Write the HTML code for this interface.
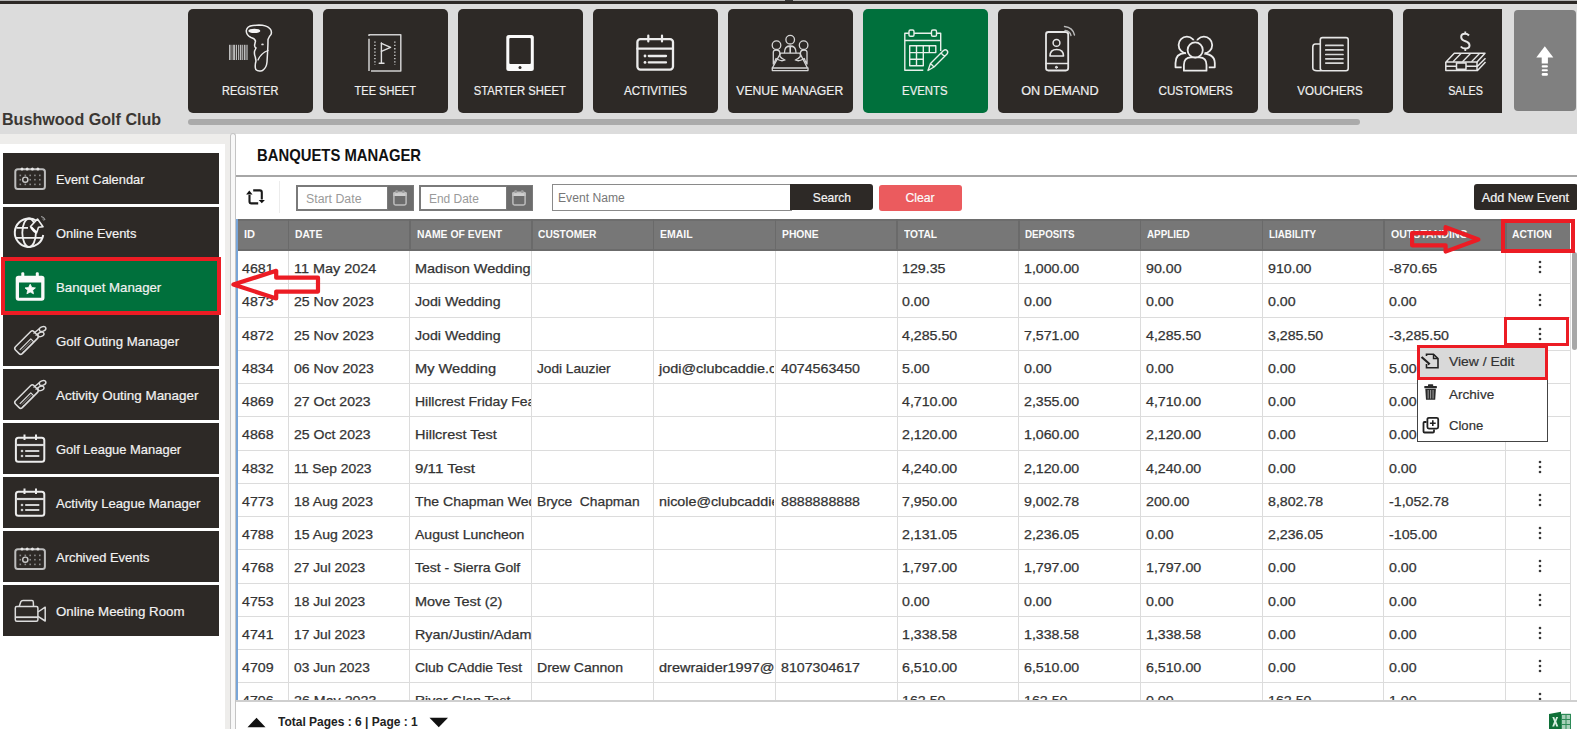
<!DOCTYPE html><html><head><meta charset="utf-8"><style>
*{margin:0;padding:0;box-sizing:border-box}
html,body{width:1577px;height:729px;overflow:hidden;background:#fff;font-family:"Liberation Sans",sans-serif;position:relative}
.a{position:absolute}
.t{position:absolute;white-space:nowrap;display:block}
.hb{position:absolute;top:9px;width:124.5px;height:103.5px;background:#2d2926;border-radius:5px}
.si{position:absolute;left:3px;width:216px;height:51px;background:#2d2926}
svg{position:absolute;overflow:visible}
</style></head><body><div class="a" style="left:0;top:0;width:1577px;height:134px;background:#dcdcdc"></div><div class="a" style="left:0;top:0;width:1577px;height:1px;background:#b4b4b4"></div><div class="a" style="left:0;top:1px;width:1577px;height:3px;background:#2d2926"></div><div class="a" style="left:784.5px;top:0;width:8px;height:1px;background:#3a3a3a"></div><span class="t" style="left:1.60px;top:111.98px;font-size:16.8px;line-height:16.8px;font-weight:bold;color:#3b3733;transform:scaleX(0.9592);transform-origin:left;">Bushwood Golf Club</span><div class="a" style="left:188px;top:0;width:1314px;height:134px;overflow:hidden"><div class="hb" style="left:0px;background:#2d2926"></div><span class="t" style="left:28.00px;top:83.76px;font-size:13.4px;line-height:13.4px;color:#f0f0f0;transform:scaleX(0.8236);transform-origin:center;-webkit-text-stroke:0.2px #f0f0f0;">REGISTER</span><div class="hb" style="left:135px;background:#2d2926"></div><span class="t" style="left:160.02px;top:83.76px;font-size:13.4px;line-height:13.4px;color:#f0f0f0;transform:scaleX(0.8245);transform-origin:center;-webkit-text-stroke:0.2px #f0f0f0;">TEE SHEET</span><div class="hb" style="left:270px;background:#2d2926"></div><span class="t" style="left:277.40px;top:83.76px;font-size:13.4px;line-height:13.4px;color:#f0f0f0;transform:scaleX(0.8402);transform-origin:center;-webkit-text-stroke:0.2px #f0f0f0;">STARTER SHEET</span><div class="hb" style="left:405px;background:#2d2926"></div><span class="t" style="left:430.77px;top:83.76px;font-size:13.4px;line-height:13.4px;color:#f0f0f0;transform:scaleX(0.8656);transform-origin:center;-webkit-text-stroke:0.2px #f0f0f0;">ACTIVITIES</span><div class="hb" style="left:540px;background:#2d2926"></div><span class="t" style="left:543.43px;top:83.76px;font-size:13.4px;line-height:13.4px;color:#f0f0f0;transform:scaleX(0.9093);transform-origin:center;-webkit-text-stroke:0.2px #f0f0f0;">VENUE MANAGER</span><div class="hb" style="left:675px;background:#00703c"></div><span class="t" style="left:710.44px;top:83.76px;font-size:13.4px;line-height:13.4px;color:#f0f0f0;transform:scaleX(0.8478);transform-origin:center;-webkit-text-stroke:0.2px #f0f0f0;">EVENTS</span><div class="hb" style="left:810px;background:#2d2926"></div><span class="t" style="left:831.30px;top:83.76px;font-size:13.4px;line-height:13.4px;color:#f0f0f0;transform:scaleX(0.9441);transform-origin:center;-webkit-text-stroke:0.2px #f0f0f0;">ON DEMAND</span><div class="hb" style="left:945px;background:#2d2926"></div><span class="t" style="left:964.56px;top:83.76px;font-size:13.4px;line-height:13.4px;color:#f0f0f0;transform:scaleX(0.8709);transform-origin:center;-webkit-text-stroke:0.2px #f0f0f0;">CUSTOMERS</span><div class="hb" style="left:1080px;background:#2d2926"></div><span class="t" style="left:1104.28px;top:83.76px;font-size:13.4px;line-height:13.4px;color:#f0f0f0;transform:scaleX(0.8624);transform-origin:center;-webkit-text-stroke:0.2px #f0f0f0;">VOUCHERS</span><div class="hb" style="left:1215px;background:#2d2926"></div><span class="t" style="left:1255.65px;top:83.76px;font-size:13.4px;line-height:13.4px;color:#f0f0f0;transform:scaleX(0.8071);transform-origin:center;-webkit-text-stroke:0.2px #f0f0f0;">SALES</span></div><div class="a" style="left:188px;top:119px;width:1172px;height:5.5px;background:#aaa;border-radius:3px"></div><div class="a" style="left:1514px;top:10px;width:62px;height:101px;background:#808080;border-radius:4px"></div><svg style="left:0;top:0" width="1577" height="134" viewBox="0 0 1577 134">
<g fill="none" stroke="#ececec" stroke-linecap="round" stroke-linejoin="round">
<!-- REGISTER: barcode + scanner -->
<g stroke="none" fill="#bdbdbd">
<rect x="229" y="44.8" width="1.6" height="15.2"/><rect x="231.6" y="44.8" width="0.8" height="15.2"/>
<rect x="233.3" y="44.8" width="1.5" height="15.2" fill="#ddd"/><rect x="235.8" y="44.8" width="1.2" height="15.2"/>
<rect x="238" y="44.8" width="0.9" height="15.2"/><rect x="239.8" y="44.8" width="1.6" height="15.2"/>
<rect x="242.2" y="44.8" width="1" height="15.2"/><rect x="244" y="44.8" width="1.5" height="15.2"/>
<rect x="246.4" y="44.8" width="1.2" height="15.2"/>
</g>
<path d="M253 25.5 Q247 26 246.3 30.5 Q246 35 251 37.5 Q255 38.5 255.5 41 L254.6 45 Q254.4 47 256 48 L254.6 51 Q254 54 255.3 57 L256 61 Q254.5 66 255.8 69.5 Q258 72 262.5 70.5 Q266.5 68 267 62 L267.7 50 Q268 44 268 39.5 Q269 36.5 271 34.5 Q272.3 31 269.8 28.5 Q266 25 259 25 Z" stroke-width="1.5"/>
<path d="M268 50.5 Q261 53 258 60" stroke-width="1.3"/>
<ellipse cx="254.3" cy="30.9" rx="6" ry="2.2" fill="#f4f4f4" stroke="none"/>
<ellipse cx="262.5" cy="44.4" rx="1.3" ry="0.9" fill="#ddd" stroke="none"/>
<!-- TEE SHEET -->
<path d="M369 36 V34.8 H400.8 V71 H371 M369 38.8 V71" stroke="#cfcfcf" stroke-width="1.5" stroke-linecap="butt"/>
<path d="M374.9 41.5 V65" stroke="#bbb" stroke-width="1.6" stroke-dasharray="1.3 2" stroke-linecap="butt"/>
<path d="M394.8 41.5 V65" stroke="#bbb" stroke-width="1.6" stroke-dasharray="1.3 2" stroke-linecap="butt"/>
<path d="M381.4 43 V63.3 M379.2 63.3 H384" stroke="#e0e0e0" stroke-width="1.4"/>
<path d="M381.4 43.3 L390.6 47.3 L381.4 51.3" stroke="#e0e0e0" stroke-width="1.4"/>
<!-- STARTER SHEET tablet -->
<rect x="506.3" y="35.1" width="27.5" height="35.9" rx="2.5" fill="#fafafa" stroke="none"/>
<rect x="509.3" y="38.1" width="21.5" height="25.8" rx="1" fill="#2d2926" stroke="none"/>
<circle cx="520" cy="67.5" r="1.5" fill="#2d2926" stroke="none"/>
<!-- ACTIVITIES -->
<rect x="637.4" y="39.1" width="35.6" height="30.5" rx="3" stroke-width="2.3"/>
<path d="M637.4 48.7 H673" stroke-width="2.2"/>
<path d="M648.3 35.5 V41.5 M662 35.5 V41.5" stroke-width="2.2"/>
<circle cx="645" cy="56" r="1.4" fill="#ececec" stroke="none"/><circle cx="645" cy="62.4" r="1.4" fill="#ececec" stroke="none"/>
<path d="M648.8 56 H666 M648.8 62.4 H666" stroke-width="2.3"/>
<!-- VENUE MANAGER -->
<g stroke="#d6d6d6" stroke-width="1.3">
<circle cx="790.2" cy="39.7" r="4.3"/><circle cx="776.5" cy="45.2" r="4.3"/><circle cx="803.6" cy="45.2" r="4.3"/>
<path d="M784.5 52.5 Q784.5 46 790.2 46 Q796 46 796 52.5"/>
<path d="M787.5 46.5 H793 M790.2 46.5 V52.5" stroke-width="1.6"/>
<path d="M780.6 53.1 H799.8 L807.5 68 H772.3 Z"/>
<path d="M772.3 68 V70.6 H808 V68"/>
<path d="M773.3 64 V52 Q773.5 50 776.5 50 Q779.5 50 779.8 52.5 L780 56.5 Q782 59 785 60 Q782 61.5 779 60 L776 58.5 Q775 62 773.3 64"/>
<path d="M807 64 V52 Q806.8 50 803.8 50 Q800.8 50 800.5 52.5 L800.3 56.5 Q798.3 59 795.3 60 Q798.3 61.5 801.3 60 L804.3 58.5 Q805.3 62 807 64"/>
</g>
<!-- EVENTS -->
<g stroke="#e8f0ea" stroke-width="1.4" stroke-linecap="butt">
<path d="M923.3 70.3 H904.8 V33.3 H940.7 V51"/>
<path d="M904.8 40.5 H940.7"/>
<rect x="909" y="30" width="5" height="6.3" rx="1.4" fill="#00703c"/><rect x="931.5" y="30" width="5" height="6.3" rx="1.4" fill="#00703c"/>
<path d="M909.7 45.8 H935.8 V52.6 H909.7 Z M909.7 52.6 V65.8 H923.3 V45.8 M916.5 45.8 V65.8 M929.3 45.8 V52.6 M909.7 59.2 H923.3"/>
<path d="M928 70.5 L930.5 63.5 L943.5 50.5 Q945.5 49 947 50.5 Q948.5 52 947 54 L934 67 Z M941 53 L945 57 M930.5 63.5 L934 67"/>
</g>
<!-- ON DEMAND -->
<g stroke="#e6e6e6" stroke-width="1.8">
<rect x="1046" y="32" width="22.2" height="38.5" rx="2.4"/>
<path d="M1046 63.5 H1068.2" stroke-width="1.5"/>
<circle cx="1056.5" cy="42.9" r="3.4" stroke-width="1.5"/>
<path d="M1050 56 Q1050 49.5 1056.7 49.5 Q1063.5 49.5 1063.5 56 Z" stroke-width="1.6"/>
<path d="M1064.5 26.5 Q1073 27.5 1074.5 35" stroke-width="1.4" stroke="#bbb"/>
<path d="M1065 30.5 Q1070 31 1071 35.5" stroke-width="1.3" stroke="#bbb"/>
</g>
<circle cx="1056.4" cy="67.3" r="1" fill="#ccc"/>
<!-- CUSTOMERS -->
<g stroke="#ececec" stroke-width="1.8">
<circle cx="1186.9" cy="45" r="8.3"/>
<circle cx="1203.9" cy="45" r="8.3"/>
<path d="M1175.5 67.3 V63 Q1175.5 53.5 1185 53 H1200 Q1214.8 53.5 1214.8 63 V67.3 Z"/>
</g>
<g fill="#2d2926" stroke="#2d2926" stroke-width="4.5">
<circle cx="1195.2" cy="49.9" r="7.6"/>
<path d="M1183.9 70.7 V65 Q1183.9 57.3 1191 57.3 H1199.5 Q1206.5 57.3 1206.5 65 V70.7 Z"/>
</g>
<g fill="#2d2926" stroke="#ececec" stroke-width="1.8">
<path d="M1183.9 70.7 V65 Q1183.9 57.3 1191 57.3 H1199.5 Q1206.5 57.3 1206.5 65 V70.7 Z"/>
<circle cx="1195.2" cy="49.9" r="7.6"/>
</g>
<!-- VOUCHERS -->
<g stroke="#e6e6e6" stroke-width="1.6">
<rect x="1320.3" y="37.6" width="27.9" height="33.2" rx="2.2"/>
<path d="M1320.3 44 H1315.5 Q1312.8 44 1312.8 47 V67.8 Q1312.8 70.8 1317 70.8 H1321"/>
<path d="M1325.8 45.4 H1343 M1325.8 49.9 H1343 M1325.8 54.5 H1343 M1325.8 58.8 H1343 M1325.8 63.1 H1343" stroke="#d8d8d8" stroke-width="1.7"/>
</g>
<!-- SALES -->
<g stroke="#e6e6e6" stroke-width="1.5" stroke-linecap="butt">
<path d="M1469 35.5 Q1467.5 33.8 1465 33.8 Q1461.2 33.8 1461.2 37 Q1461.2 40 1465.5 41.2 Q1469.5 42.5 1469.5 45.5 Q1469.5 48.5 1465.2 48.5 Q1462.3 48.5 1460.8 46.5" stroke-width="2"/>
<path d="M1465.3 31.5 V34 M1465.3 48.5 V51" stroke-width="1.8"/>
<path d="M1454.3 53.3 H1485 L1477 62 H1446 Z"/>
<path d="M1461 53.5 L1453 61.7 M1470.5 53.5 L1462.5 61.7 M1479.5 53.5 L1471.5 61.7" stroke-width="1.3"/>
<path d="M1445.8 62 V70.5 H1477.5 L1485.5 62 M1445.8 66.3 H1477.5 L1485.5 58.3 M1477 62 V70.5"/>
<rect x="1456.5" y="63" width="9.5" height="6.2" fill="#2d2926" stroke="#e6e6e6" stroke-width="1.5"/>
</g>
</g>
<!-- up arrow -->
<g fill="#fff">
<path d="M1544.8 46.3 L1553.3 57.6 H1536.3 Z"/>
<rect x="1541.7" y="57" width="6.2" height="6.5"/>
<rect x="1541.7" y="65.2" width="6.2" height="2.4" rx="1"/>
<rect x="1541.7" y="69.3" width="6.2" height="2" rx="1"/>
<rect x="1541.7" y="73" width="6.2" height="2.8" rx="1.2"/>
</g>
</svg>
<div class="a" style="left:0;top:134px;width:230px;height:595px;background:#eeedeb"></div><div class="a" style="left:0;top:144px;width:225px;height:585px;background:#fff"></div><div class="si" style="top:152.5px;background:#2d2926"></div><span class="t" style="left:56.30px;top:173.04px;font-size:13.3px;line-height:13.3px;color:#f2f2f2;transform:scaleX(0.9647);transform-origin:left;-webkit-text-stroke:0.2px #f2f2f2;">Event Calendar</span><div class="si" style="top:206.5px;background:#2d2926"></div><span class="t" style="left:56.30px;top:227.04px;font-size:13.3px;line-height:13.3px;color:#f2f2f2;transform:scaleX(0.9713);transform-origin:left;-webkit-text-stroke:0.2px #f2f2f2;">Online Events</span><div class="si" style="top:260.5px;background:#00703c"></div><span class="t" style="left:56.30px;top:281.04px;font-size:13.3px;line-height:13.3px;color:#f2f2f2;transform:scaleX(0.9959);transform-origin:left;-webkit-text-stroke:0.2px #f2f2f2;">Banquet Manager</span><div class="si" style="top:314.5px;background:#2d2926"></div><span class="t" style="left:56.30px;top:335.04px;font-size:13.3px;line-height:13.3px;color:#f2f2f2;transform:scaleX(0.9971);transform-origin:left;-webkit-text-stroke:0.2px #f2f2f2;">Golf Outing Manager</span><div class="si" style="top:368.5px;background:#2d2926"></div><span class="t" style="left:56.30px;top:389.04px;font-size:13.3px;line-height:13.3px;color:#f2f2f2;transform:scaleX(1.0090);transform-origin:left;-webkit-text-stroke:0.2px #f2f2f2;">Activity Outing Manager</span><div class="si" style="top:422.5px;background:#2d2926"></div><span class="t" style="left:56.30px;top:443.04px;font-size:13.3px;line-height:13.3px;color:#f2f2f2;transform:scaleX(0.9728);transform-origin:left;-webkit-text-stroke:0.2px #f2f2f2;">Golf League Manager</span><div class="si" style="top:476.5px;background:#2d2926"></div><span class="t" style="left:56.30px;top:497.04px;font-size:13.3px;line-height:13.3px;color:#f2f2f2;transform:scaleX(0.9872);transform-origin:left;-webkit-text-stroke:0.2px #f2f2f2;">Activity League Manager</span><div class="si" style="top:530.5px;background:#2d2926"></div><span class="t" style="left:56.30px;top:551.04px;font-size:13.3px;line-height:13.3px;color:#f2f2f2;transform:scaleX(0.9734);transform-origin:left;-webkit-text-stroke:0.2px #f2f2f2;">Archived Events</span><div class="si" style="top:584.5px;background:#2d2926"></div><span class="t" style="left:56.30px;top:605.04px;font-size:13.3px;line-height:13.3px;color:#f2f2f2;transform:scaleX(0.9997);transform-origin:left;-webkit-text-stroke:0.2px #f2f2f2;">Online Meeting Room</span><svg style="left:0;top:0" width="230" height="729" viewBox="0 0 230 729"><g transform="translate(0,0.0)"><rect x="15.3" y="169.2" width="29.6" height="19.7" rx="2.5" fill="none" stroke="#bdbdbd" stroke-width="2"/><circle cx="22" cy="169" r="1.5" fill="#e6e6e6"/><circle cx="27.2" cy="169" r="1.5" fill="#e6e6e6"/><circle cx="32.4" cy="169" r="1.5" fill="#e6e6e6"/><circle cx="37.9" cy="169" r="1.5" fill="#e6e6e6"/><rect x="19.5" y="174.6" width="1.6" height="1.6" fill="#8a8a8a"/><rect x="24.5" y="174.6" width="1.6" height="1.6" fill="#8a8a8a"/><rect x="29.4" y="174.6" width="1.6" height="1.6" fill="#8a8a8a"/><rect x="34.1" y="174.6" width="1.6" height="1.6" fill="#8a8a8a"/><rect x="39.0" y="174.6" width="1.6" height="1.6" fill="#8a8a8a"/><rect x="19.5" y="178.89999999999998" width="1.6" height="1.6" fill="#8a8a8a"/><rect x="29.4" y="178.89999999999998" width="1.6" height="1.6" fill="#8a8a8a"/><rect x="34.1" y="178.89999999999998" width="1.6" height="1.6" fill="#8a8a8a"/><rect x="39.0" y="178.89999999999998" width="1.6" height="1.6" fill="#8a8a8a"/><rect x="19.5" y="183.6" width="1.6" height="1.6" fill="#8a8a8a"/><rect x="24.5" y="183.6" width="1.6" height="1.6" fill="#8a8a8a"/><rect x="29.4" y="183.6" width="1.6" height="1.6" fill="#8a8a8a"/><rect x="34.1" y="183.6" width="1.6" height="1.6" fill="#8a8a8a"/><rect x="39.0" y="183.6" width="1.6" height="1.6" fill="#8a8a8a"/><circle cx="25.3" cy="179.7" r="2.6" fill="none" stroke="#c8c8c8" stroke-width="1.4"/></g><g fill="none" stroke="#efefef" stroke-width="2">
<path d="M36 220.5 Q33 218.5 29.1 218.4 A14.3 14.3 0 1 0 43.2 235"/>
<ellipse cx="29.1" cy="232.7" rx="6.8" ry="14.2" stroke-width="1.8"/>
<path d="M16.5 227.9 H28 M15 237.8 H43" stroke-width="1.8"/>
</g>
<path d="M30.5 226.5 L37.5 219 L43 226.8 L38.5 227.3 L36.5 233 Q33 231 31.5 228.5 Z" fill="#2d2926" stroke="#efefef" stroke-width="1.6" stroke-linejoin="round"/>
<path d="M31 227 L36.5 232.5" stroke="#fff" stroke-width="2.2"/>
<path d="M41 216.5 Q44 217 45 220" fill="none" stroke="#999" stroke-width="1.2"/>
<path d="M42.5 219 Q43.5 219.5 43.8 220.5" fill="none" stroke="#999" stroke-width="1"/><g>
<path d="M15.7 278.6 Q15.7 275.8 18.5 275.8 H41.7 Q44.5 275.8 44.5 278.6 V297.8 Q44.5 300.7 41.7 300.7 H18.5 Q15.7 300.7 15.7 297.8 Z M19 282.6 V297.7 H41.2 V282.6 Z" fill="#fafafa" fill-rule="evenodd"/>
<rect x="21.3" y="272.3" width="3" height="5" rx="1.2" fill="#fafafa"/><rect x="35.8" y="272.3" width="3" height="5" rx="1.2" fill="#fafafa"/>
<path d="M30.2 284.2 L31.8 287.5 L35.4 287.9 L32.7 290.3 L33.5 293.8 L30.2 292 L26.9 293.8 L27.7 290.3 L25 287.9 L28.6 287.5 Z" fill="#fafafa" stroke="#fafafa" stroke-width="0.8" stroke-linejoin="round"/>
</g><g transform="translate(0,0.0)" fill="none" stroke="#dcdcdc" stroke-width="1.5" stroke-linejoin="round">
<rect x="13.5" y="337.8" width="26" height="9.6" rx="2.2" transform="rotate(-45 26.5 342.6)"/>
<path d="M19.8 349.8 L30.8 338.8 L33.8 341.8 L22.8 352.8" stroke-width="1.2"/>
<path d="M22 350.5 L31.5 341 M24 351 L32.3 342.7" stroke-width="0.7" stroke="#aaa"/>
<path d="M33.5 333.5 L39.5 328.5 M35.5 335.5 L38.5 333.5" stroke-width="1.3"/>
<ellipse cx="42.6" cy="329" rx="3.4" ry="2.3" transform="rotate(-20 42.6 329)" stroke-width="1.4"/>
<ellipse cx="40.9" cy="334.4" rx="3.2" ry="2.1" transform="rotate(-20 40.9 334.4)" stroke-width="1.4"/>
</g><g transform="translate(0,54.0)" fill="none" stroke="#dcdcdc" stroke-width="1.5" stroke-linejoin="round">
<rect x="13.5" y="337.8" width="26" height="9.6" rx="2.2" transform="rotate(-45 26.5 342.6)"/>
<path d="M19.8 349.8 L30.8 338.8 L33.8 341.8 L22.8 352.8" stroke-width="1.2"/>
<path d="M22 350.5 L31.5 341 M24 351 L32.3 342.7" stroke-width="0.7" stroke="#aaa"/>
<path d="M33.5 333.5 L39.5 328.5 M35.5 335.5 L38.5 333.5" stroke-width="1.3"/>
<ellipse cx="42.6" cy="329" rx="3.4" ry="2.3" transform="rotate(-20 42.6 329)" stroke-width="1.4"/>
<ellipse cx="40.9" cy="334.4" rx="3.2" ry="2.1" transform="rotate(-20 40.9 334.4)" stroke-width="1.4"/>
</g><g transform="translate(0,0.0)" fill="none" stroke="#ececec">
<rect x="15.9" y="437.8" width="28.4" height="24" rx="2.5" stroke-width="2"/>
<path d="M15.9 445 H44.3" stroke-width="2.2" stroke="#d8d8d8"/>
<path d="M24.5 434.5 V440 M36 434.5 V440" stroke-width="2"/>
<circle cx="22" cy="451" r="1.3" fill="#ccc" stroke="none"/><circle cx="22" cy="456" r="1.3" fill="#ccc" stroke="none"/>
<path d="M25.2 451 H39.3 M25.2 456 H39.3" stroke-width="2.1" stroke="#d0d0d0"/>
</g><g transform="translate(0,54.0)" fill="none" stroke="#ececec">
<rect x="15.9" y="437.8" width="28.4" height="24" rx="2.5" stroke-width="2"/>
<path d="M15.9 445 H44.3" stroke-width="2.2" stroke="#d8d8d8"/>
<path d="M24.5 434.5 V440 M36 434.5 V440" stroke-width="2"/>
<circle cx="22" cy="451" r="1.3" fill="#ccc" stroke="none"/><circle cx="22" cy="456" r="1.3" fill="#ccc" stroke="none"/>
<path d="M25.2 451 H39.3 M25.2 456 H39.3" stroke-width="2.1" stroke="#d0d0d0"/>
</g><g transform="translate(0,380.0)"><rect x="15.3" y="169.2" width="29.6" height="19.7" rx="2.5" fill="none" stroke="#bdbdbd" stroke-width="2"/><circle cx="22" cy="169" r="1.5" fill="#e6e6e6"/><circle cx="27.2" cy="169" r="1.5" fill="#e6e6e6"/><circle cx="32.4" cy="169" r="1.5" fill="#e6e6e6"/><circle cx="37.9" cy="169" r="1.5" fill="#e6e6e6"/><rect x="19.5" y="174.6" width="1.6" height="1.6" fill="#8a8a8a"/><rect x="24.5" y="174.6" width="1.6" height="1.6" fill="#8a8a8a"/><rect x="29.4" y="174.6" width="1.6" height="1.6" fill="#8a8a8a"/><rect x="34.1" y="174.6" width="1.6" height="1.6" fill="#8a8a8a"/><rect x="39.0" y="174.6" width="1.6" height="1.6" fill="#8a8a8a"/><rect x="19.5" y="178.89999999999998" width="1.6" height="1.6" fill="#8a8a8a"/><rect x="29.4" y="178.89999999999998" width="1.6" height="1.6" fill="#8a8a8a"/><rect x="34.1" y="178.89999999999998" width="1.6" height="1.6" fill="#8a8a8a"/><rect x="39.0" y="178.89999999999998" width="1.6" height="1.6" fill="#8a8a8a"/><rect x="19.5" y="183.6" width="1.6" height="1.6" fill="#8a8a8a"/><rect x="24.5" y="183.6" width="1.6" height="1.6" fill="#8a8a8a"/><rect x="29.4" y="183.6" width="1.6" height="1.6" fill="#8a8a8a"/><rect x="34.1" y="183.6" width="1.6" height="1.6" fill="#8a8a8a"/><rect x="39.0" y="183.6" width="1.6" height="1.6" fill="#8a8a8a"/><circle cx="25.3" cy="179.7" r="2.6" fill="none" stroke="#c8c8c8" stroke-width="1.4"/></g><g fill="none" stroke="#dcdcdc" stroke-width="1.5" stroke-linejoin="round">
<rect x="15.3" y="606.5" width="22.6" height="14.8" rx="1.5"/>
<path d="M15.3 617.2 H37.9" stroke-width="1.8"/>
<path d="M19.3 606.3 L20.8 601.8 Q21.3 600.5 23 600.5 H32 Q33.2 600.5 33.3 602 L33.5 606.3"/>
<path d="M38 612 L45.2 607.2 V621 L38 616.3"/>
</g></svg><div class="a" style="left:230px;top:133px;width:6px;height:596px;border:1px solid #c4c4c4;border-bottom:none;border-radius:3px 3px 0 0;background:#f8f8f8"></div><span class="t" style="left:257.40px;top:147.00px;font-size:16.3px;line-height:16.3px;font-weight:bold;color:#111;transform:scaleX(0.9115);transform-origin:left;">BANQUETS MANAGER</span><div class="a" style="left:236px;top:175px;width:1341px;height:2px;background:#a6a6a6"></div><svg style="left:240px;top:182px" width="30" height="30" viewBox="0 0 30 30">
<path d="M9.5 13 V19.5 Q9.5 21.4 11.5 21.4 H18.2" fill="none" stroke="#1a1a1a" stroke-width="2.1"/>
<path d="M13.2 8.4 H19.8 Q21.8 8.4 21.8 10.4 V17.5" fill="none" stroke="#1a1a1a" stroke-width="2.1"/>
<path d="M9.3 8.6 L12.5 12.4 L6.1 12.4 Z" fill="#111"/>
<path d="M21.8 21.2 L24.9 18 L18.7 18 Z" fill="#111"/>
</svg><div class="a" style="left:278.5px;top:181px;width:1.5px;height:32px;background:#ececec"></div><div class="a" style="left:296px;top:184.5px;width:118px;height:26px;border:2px solid #7a7a7a;background:#fff"></div><div class="a" style="left:386.5px;top:184.5px;width:27.5px;height:26px;background:#6d6d6d;border:1.5px solid #7a7a7a"></div><span class="t" style="left:306.20px;top:193.04px;font-size:12px;line-height:12px;color:#9a9a9a;transform:scaleX(1.0270);transform-origin:left;">Start Date</span><svg style="left:392px;top:189px" width="16" height="17" viewBox="0 0 16 17">
<path d="M1.2 4.5 Q1.2 2.8 3 2.8 H13 Q14.8 2.8 14.8 4.5 V7 H1.2 Z" fill="#cfcfcf"/>
<rect x="1.9" y="3.4" width="12.2" height="12.5" rx="1.6" fill="none" stroke="#bdbdbd" stroke-width="1.5"/>
<rect x="3.4" y="1" width="2.6" height="3" rx="1.2" fill="#9a9a9a"/><rect x="10" y="1" width="2.6" height="3" rx="1.2" fill="#9a9a9a"/>
</svg><div class="a" style="left:419px;top:184.5px;width:114px;height:26px;border:2px solid #7a7a7a;background:#fff"></div><div class="a" style="left:505.5px;top:184.5px;width:27.5px;height:26px;background:#6d6d6d;border:1.5px solid #7a7a7a"></div><span class="t" style="left:429.20px;top:193.04px;font-size:12px;line-height:12px;color:#9a9a9a;transform:scaleX(0.9959);transform-origin:left;">End Date</span><svg style="left:511px;top:189px" width="16" height="17" viewBox="0 0 16 17">
<path d="M1.2 4.5 Q1.2 2.8 3 2.8 H13 Q14.8 2.8 14.8 4.5 V7 H1.2 Z" fill="#cfcfcf"/>
<rect x="1.9" y="3.4" width="12.2" height="12.5" rx="1.6" fill="none" stroke="#bdbdbd" stroke-width="1.5"/>
<rect x="3.4" y="1" width="2.6" height="3" rx="1.2" fill="#9a9a9a"/><rect x="10" y="1" width="2.6" height="3" rx="1.2" fill="#9a9a9a"/>
</svg><div class="a" style="left:551.5px;top:184px;width:240px;height:26.5px;border:1.5px solid #8a8a8a;background:#fff"></div><span class="t" style="left:557.50px;top:192.34px;font-size:12px;line-height:12px;color:#777;transform:scaleX(1.0112);transform-origin:left;">Event Name</span><div class="a" style="left:790.3px;top:184.3px;width:83px;height:26.2px;background:#2d2926;border-radius:0 3px 3px 0"></div><span class="t" style="left:811.54px;top:191.83px;font-size:12.6px;line-height:12.6px;color:#f4f4f4;transform:scaleX(0.9584);transform-origin:center;-webkit-text-stroke:0.2px #f4f4f4;">Search</span><div class="a" style="left:879px;top:184.6px;width:83px;height:26px;background:#eb5b5e;border-radius:3px"></div><span class="t" style="left:905.44px;top:191.83px;font-size:12.6px;line-height:12.6px;color:#fff;transform:scaleX(0.9713);transform-origin:center;-webkit-text-stroke:0.2px #f4f4f4;">Clear</span><div class="a" style="left:1473.5px;top:184.2px;width:104px;height:26px;background:#2d2926;border-radius:3px"></div><span class="t" style="left:1482.08px;top:191.83px;font-size:12.6px;line-height:12.6px;color:#f4f4f4;transform:scaleX(1.0056);transform-origin:center;-webkit-text-stroke:0.2px #f4f4f4;">Add New Event</span><div class="a" style="left:237px;top:219px;width:1333px;height:32px;background:#777"></div><div class="a" style="left:237px;top:249px;width:1333px;height:2px;background:#6b6b6b"></div><div class="a" style="left:237px;top:219px;width:1333px;height:2px;background:#6d6d6d"></div><span class="t" style="left:243.50px;top:229.42px;font-size:11.2px;line-height:11.2px;font-weight:bold;color:#fafafa;transform:scaleX(0.9851);transform-origin:left;">ID</span><span class="t" style="left:295.10px;top:229.42px;font-size:11.2px;line-height:11.2px;font-weight:bold;color:#fafafa;transform:scaleX(0.9203);transform-origin:left;">DATE</span><div class="a" style="left:287.85px;top:219px;width:1.5px;height:32px;background:#6a6a6a"></div><span class="t" style="left:416.50px;top:229.42px;font-size:11.2px;line-height:11.2px;font-weight:bold;color:#fafafa;transform:scaleX(0.9262);transform-origin:left;">NAME OF EVENT</span><div class="a" style="left:409.25px;top:219px;width:1.5px;height:32px;background:#6a6a6a"></div><span class="t" style="left:538.25px;top:229.42px;font-size:11.2px;line-height:11.2px;font-weight:bold;color:#fafafa;transform:scaleX(0.9147);transform-origin:left;">CUSTOMER</span><div class="a" style="left:531.0px;top:219px;width:1.5px;height:32px;background:#6a6a6a"></div><span class="t" style="left:660.00px;top:229.42px;font-size:11.2px;line-height:11.2px;font-weight:bold;color:#fafafa;transform:scaleX(0.9383);transform-origin:left;">EMAIL</span><div class="a" style="left:652.75px;top:219px;width:1.5px;height:32px;background:#6a6a6a"></div><span class="t" style="left:781.75px;top:229.42px;font-size:11.2px;line-height:11.2px;font-weight:bold;color:#fafafa;transform:scaleX(0.9221);transform-origin:left;">PHONE</span><div class="a" style="left:774.5px;top:219px;width:1.5px;height:32px;background:#6a6a6a"></div><span class="t" style="left:903.50px;top:229.42px;font-size:11.2px;line-height:11.2px;font-weight:bold;color:#fafafa;transform:scaleX(0.9134);transform-origin:left;">TOTAL</span><div class="a" style="left:896.25px;top:219px;width:1.5px;height:32px;background:#6a6a6a"></div><span class="t" style="left:1025.25px;top:229.42px;font-size:11.2px;line-height:11.2px;font-weight:bold;color:#fafafa;transform:scaleX(0.8761);transform-origin:left;">DEPOSITS</span><div class="a" style="left:1018.0px;top:219px;width:1.5px;height:32px;background:#6a6a6a"></div><span class="t" style="left:1147.00px;top:229.42px;font-size:11.2px;line-height:11.2px;font-weight:bold;color:#fafafa;transform:scaleX(0.8813);transform-origin:left;">APPLIED</span><div class="a" style="left:1139.75px;top:219px;width:1.5px;height:32px;background:#6a6a6a"></div><span class="t" style="left:1268.75px;top:229.42px;font-size:11.2px;line-height:11.2px;font-weight:bold;color:#fafafa;transform:scaleX(0.8802);transform-origin:left;">LIABILITY</span><div class="a" style="left:1261.5px;top:219px;width:1.5px;height:32px;background:#6a6a6a"></div><span class="t" style="left:1390.50px;top:229.42px;font-size:11.2px;line-height:11.2px;font-weight:bold;color:#fafafa;transform:scaleX(0.9456);transform-origin:left;">OUTSTANDING</span><div class="a" style="left:1383.25px;top:219px;width:1.5px;height:32px;background:#6a6a6a"></div><span class="t" style="left:1512.25px;top:229.42px;font-size:11.2px;line-height:11.2px;font-weight:bold;color:#fafafa;transform:scaleX(0.9260);transform-origin:left;">ACTION</span><div class="a" style="left:1505.0px;top:219px;width:1.5px;height:32px;background:#6a6a6a"></div><div class="a" style="left:237px;top:251px;width:1335px;height:450px;overflow:hidden"><div class="a" style="left:0;top:32px;width:1333px;height:1px;background:#dcdcdc"></div><div class="a" style="left:0px;top:0.00px;width:50.60000000000002px;height:33px;overflow:hidden"><span class="t" style="left:5.30px;top:11.03px;font-size:13.2px;line-height:13.2px;color:#333;transform:scaleX(1.0773);transform-origin:left;-webkit-text-stroke:0.25px #333;">4681</span></div><div class="a" style="left:51.60000000000002px;top:0.00px;width:120.39999999999998px;height:33px;overflow:hidden"><span class="t" style="left:5.30px;top:11.03px;font-size:13.2px;line-height:13.2px;color:#333;transform:scaleX(1.0935);transform-origin:left;-webkit-text-stroke:0.25px #333;">11 May 2024</span></div><div class="a" style="left:173px;top:0.00px;width:120.75px;height:33px;overflow:hidden"><span class="t" style="left:5.30px;top:11.03px;font-size:13.2px;line-height:13.2px;color:#333;transform:scaleX(1.0983);transform-origin:left;-webkit-text-stroke:0.25px #333;">Madison Wedding</span></div><div class="a" style="left:660px;top:0.00px;width:120.75px;height:33px;overflow:hidden"><span class="t" style="left:5.30px;top:11.03px;font-size:13.2px;line-height:13.2px;color:#333;transform:scaleX(1.0768);transform-origin:left;-webkit-text-stroke:0.25px #333;">129.35</span></div><div class="a" style="left:781.75px;top:0.00px;width:120.75px;height:33px;overflow:hidden"><span class="t" style="left:5.30px;top:11.03px;font-size:13.2px;line-height:13.2px;color:#333;transform:scaleX(1.0760);transform-origin:left;-webkit-text-stroke:0.25px #333;">1,000.00</span></div><div class="a" style="left:903.5px;top:0.00px;width:120.75px;height:33px;overflow:hidden"><span class="t" style="left:5.30px;top:11.03px;font-size:13.2px;line-height:13.2px;color:#333;transform:scaleX(1.0767);transform-origin:left;-webkit-text-stroke:0.25px #333;">90.00</span></div><div class="a" style="left:1025.25px;top:0.00px;width:120.75px;height:33px;overflow:hidden"><span class="t" style="left:5.30px;top:11.03px;font-size:13.2px;line-height:13.2px;color:#333;transform:scaleX(1.0768);transform-origin:left;-webkit-text-stroke:0.25px #333;">910.00</span></div><div class="a" style="left:1147px;top:0.00px;width:120.75px;height:33px;overflow:hidden"><span class="t" style="left:5.30px;top:11.03px;font-size:13.2px;line-height:13.2px;color:#333;transform:scaleX(1.0777);transform-origin:left;-webkit-text-stroke:0.25px #333;">-870.65</span></div><svg style="left:1301px;top:9.00px" width="4" height="14"><circle cx="2" cy="2" r="1.3" fill="#3a3a3a"/><circle cx="2" cy="7" r="1.3" fill="#3a3a3a"/><circle cx="2" cy="12" r="1.3" fill="#3a3a3a"/></svg><div class="a" style="left:0;top:66px;width:1333px;height:1px;background:#dcdcdc"></div><div class="a" style="left:0px;top:33.25px;width:50.60000000000002px;height:33px;overflow:hidden"><span class="t" style="left:5.30px;top:11.03px;font-size:13.2px;line-height:13.2px;color:#333;transform:scaleX(1.0773);transform-origin:left;-webkit-text-stroke:0.25px #333;">4873</span></div><div class="a" style="left:51.60000000000002px;top:33.25px;width:120.39999999999998px;height:33px;overflow:hidden"><span class="t" style="left:5.30px;top:11.03px;font-size:13.2px;line-height:13.2px;color:#333;transform:scaleX(1.0668);transform-origin:left;-webkit-text-stroke:0.25px #333;">25 Nov 2023</span></div><div class="a" style="left:173px;top:33.25px;width:120.75px;height:33px;overflow:hidden"><span class="t" style="left:5.30px;top:11.03px;font-size:13.2px;line-height:13.2px;color:#333;transform:scaleX(1.0742);transform-origin:left;-webkit-text-stroke:0.25px #333;">Jodi Wedding</span></div><div class="a" style="left:660px;top:33.25px;width:120.75px;height:33px;overflow:hidden"><span class="t" style="left:5.30px;top:11.03px;font-size:13.2px;line-height:13.2px;color:#333;transform:scaleX(1.0766);transform-origin:left;-webkit-text-stroke:0.25px #333;">0.00</span></div><div class="a" style="left:781.75px;top:33.25px;width:120.75px;height:33px;overflow:hidden"><span class="t" style="left:5.30px;top:11.03px;font-size:13.2px;line-height:13.2px;color:#333;transform:scaleX(1.0766);transform-origin:left;-webkit-text-stroke:0.25px #333;">0.00</span></div><div class="a" style="left:903.5px;top:33.25px;width:120.75px;height:33px;overflow:hidden"><span class="t" style="left:5.30px;top:11.03px;font-size:13.2px;line-height:13.2px;color:#333;transform:scaleX(1.0766);transform-origin:left;-webkit-text-stroke:0.25px #333;">0.00</span></div><div class="a" style="left:1025.25px;top:33.25px;width:120.75px;height:33px;overflow:hidden"><span class="t" style="left:5.30px;top:11.03px;font-size:13.2px;line-height:13.2px;color:#333;transform:scaleX(1.0766);transform-origin:left;-webkit-text-stroke:0.25px #333;">0.00</span></div><div class="a" style="left:1147px;top:33.25px;width:120.75px;height:33px;overflow:hidden"><span class="t" style="left:5.30px;top:11.03px;font-size:13.2px;line-height:13.2px;color:#333;transform:scaleX(1.0766);transform-origin:left;-webkit-text-stroke:0.25px #333;">0.00</span></div><svg style="left:1301px;top:42.25px" width="4" height="14"><circle cx="2" cy="2" r="1.3" fill="#3a3a3a"/><circle cx="2" cy="7" r="1.3" fill="#3a3a3a"/><circle cx="2" cy="12" r="1.3" fill="#3a3a3a"/></svg><div class="a" style="left:0;top:99px;width:1333px;height:1px;background:#dcdcdc"></div><div class="a" style="left:0px;top:66.50px;width:50.60000000000002px;height:33px;overflow:hidden"><span class="t" style="left:5.30px;top:11.03px;font-size:13.2px;line-height:13.2px;color:#333;transform:scaleX(1.0773);transform-origin:left;-webkit-text-stroke:0.25px #333;">4872</span></div><div class="a" style="left:51.60000000000002px;top:66.50px;width:120.39999999999998px;height:33px;overflow:hidden"><span class="t" style="left:5.30px;top:11.03px;font-size:13.2px;line-height:13.2px;color:#333;transform:scaleX(1.0668);transform-origin:left;-webkit-text-stroke:0.25px #333;">25 Nov 2023</span></div><div class="a" style="left:173px;top:66.50px;width:120.75px;height:33px;overflow:hidden"><span class="t" style="left:5.30px;top:11.03px;font-size:13.2px;line-height:13.2px;color:#333;transform:scaleX(1.0742);transform-origin:left;-webkit-text-stroke:0.25px #333;">Jodi Wedding</span></div><div class="a" style="left:660px;top:66.50px;width:120.75px;height:33px;overflow:hidden"><span class="t" style="left:5.30px;top:11.03px;font-size:13.2px;line-height:13.2px;color:#333;transform:scaleX(1.0760);transform-origin:left;-webkit-text-stroke:0.25px #333;">4,285.50</span></div><div class="a" style="left:781.75px;top:66.50px;width:120.75px;height:33px;overflow:hidden"><span class="t" style="left:5.30px;top:11.03px;font-size:13.2px;line-height:13.2px;color:#333;transform:scaleX(1.0760);transform-origin:left;-webkit-text-stroke:0.25px #333;">7,571.00</span></div><div class="a" style="left:903.5px;top:66.50px;width:120.75px;height:33px;overflow:hidden"><span class="t" style="left:5.30px;top:11.03px;font-size:13.2px;line-height:13.2px;color:#333;transform:scaleX(1.0760);transform-origin:left;-webkit-text-stroke:0.25px #333;">4,285.50</span></div><div class="a" style="left:1025.25px;top:66.50px;width:120.75px;height:33px;overflow:hidden"><span class="t" style="left:5.30px;top:11.03px;font-size:13.2px;line-height:13.2px;color:#333;transform:scaleX(1.0760);transform-origin:left;-webkit-text-stroke:0.25px #333;">3,285.50</span></div><div class="a" style="left:1147px;top:66.50px;width:120.75px;height:33px;overflow:hidden"><span class="t" style="left:5.30px;top:11.03px;font-size:13.2px;line-height:13.2px;color:#333;transform:scaleX(1.0767);transform-origin:left;-webkit-text-stroke:0.25px #333;">-3,285.50</span></div><svg style="left:1301px;top:75.50px" width="4" height="14"><circle cx="2" cy="2" r="1.3" fill="#3a3a3a"/><circle cx="2" cy="7" r="1.3" fill="#3a3a3a"/><circle cx="2" cy="12" r="1.3" fill="#3a3a3a"/></svg><div class="a" style="left:0;top:132px;width:1333px;height:1px;background:#dcdcdc"></div><div class="a" style="left:0px;top:99.75px;width:50.60000000000002px;height:33px;overflow:hidden"><span class="t" style="left:5.30px;top:11.03px;font-size:13.2px;line-height:13.2px;color:#333;transform:scaleX(1.0773);transform-origin:left;-webkit-text-stroke:0.25px #333;">4834</span></div><div class="a" style="left:51.60000000000002px;top:99.75px;width:120.39999999999998px;height:33px;overflow:hidden"><span class="t" style="left:5.30px;top:11.03px;font-size:13.2px;line-height:13.2px;color:#333;transform:scaleX(1.0668);transform-origin:left;-webkit-text-stroke:0.25px #333;">06 Nov 2023</span></div><div class="a" style="left:173px;top:99.75px;width:120.75px;height:33px;overflow:hidden"><span class="t" style="left:5.30px;top:11.03px;font-size:13.2px;line-height:13.2px;color:#333;transform:scaleX(1.1089);transform-origin:left;-webkit-text-stroke:0.25px #333;">My Wedding</span></div><div class="a" style="left:294.75px;top:99.75px;width:120.75px;height:33px;overflow:hidden"><span class="t" style="left:5.30px;top:11.03px;font-size:13.2px;line-height:13.2px;color:#333;transform:scaleX(1.0351);transform-origin:left;-webkit-text-stroke:0.25px #333;">Jodi Lauzier</span></div><div class="a" style="left:416.5px;top:99.75px;width:120.75px;height:33px;overflow:hidden"><span class="t" style="left:5.30px;top:11.03px;font-size:13.2px;line-height:13.2px;color:#333;transform:scaleX(1.0929);transform-origin:left;-webkit-text-stroke:0.25px #333;">jodi@clubcaddie.com</span></div><div class="a" style="left:538.25px;top:99.75px;width:120.75px;height:33px;overflow:hidden"><span class="t" style="left:5.30px;top:11.03px;font-size:13.2px;line-height:13.2px;color:#333;transform:scaleX(1.0773);transform-origin:left;-webkit-text-stroke:0.25px #333;">4074563450</span></div><div class="a" style="left:660px;top:99.75px;width:120.75px;height:33px;overflow:hidden"><span class="t" style="left:5.30px;top:11.03px;font-size:13.2px;line-height:13.2px;color:#333;transform:scaleX(1.0766);transform-origin:left;-webkit-text-stroke:0.25px #333;">5.00</span></div><div class="a" style="left:781.75px;top:99.75px;width:120.75px;height:33px;overflow:hidden"><span class="t" style="left:5.30px;top:11.03px;font-size:13.2px;line-height:13.2px;color:#333;transform:scaleX(1.0766);transform-origin:left;-webkit-text-stroke:0.25px #333;">0.00</span></div><div class="a" style="left:903.5px;top:99.75px;width:120.75px;height:33px;overflow:hidden"><span class="t" style="left:5.30px;top:11.03px;font-size:13.2px;line-height:13.2px;color:#333;transform:scaleX(1.0766);transform-origin:left;-webkit-text-stroke:0.25px #333;">0.00</span></div><div class="a" style="left:1025.25px;top:99.75px;width:120.75px;height:33px;overflow:hidden"><span class="t" style="left:5.30px;top:11.03px;font-size:13.2px;line-height:13.2px;color:#333;transform:scaleX(1.0766);transform-origin:left;-webkit-text-stroke:0.25px #333;">0.00</span></div><div class="a" style="left:1147px;top:99.75px;width:120.75px;height:33px;overflow:hidden"><span class="t" style="left:5.30px;top:11.03px;font-size:13.2px;line-height:13.2px;color:#333;transform:scaleX(1.0766);transform-origin:left;-webkit-text-stroke:0.25px #333;">5.00</span></div><svg style="left:1301px;top:108.75px" width="4" height="14"><circle cx="2" cy="2" r="1.3" fill="#3a3a3a"/><circle cx="2" cy="7" r="1.3" fill="#3a3a3a"/><circle cx="2" cy="12" r="1.3" fill="#3a3a3a"/></svg><div class="a" style="left:0;top:165px;width:1333px;height:1px;background:#dcdcdc"></div><div class="a" style="left:0px;top:133.00px;width:50.60000000000002px;height:33px;overflow:hidden"><span class="t" style="left:5.30px;top:11.03px;font-size:13.2px;line-height:13.2px;color:#333;transform:scaleX(1.0773);transform-origin:left;-webkit-text-stroke:0.25px #333;">4869</span></div><div class="a" style="left:51.60000000000002px;top:133.00px;width:120.39999999999998px;height:33px;overflow:hidden"><span class="t" style="left:5.30px;top:11.03px;font-size:13.2px;line-height:13.2px;color:#333;transform:scaleX(1.0659);transform-origin:left;-webkit-text-stroke:0.25px #333;">27 Oct 2023</span></div><div class="a" style="left:173px;top:133.00px;width:120.75px;height:33px;overflow:hidden"><span class="t" style="left:5.30px;top:11.03px;font-size:13.2px;line-height:13.2px;color:#333;transform:scaleX(1.0594);transform-origin:left;-webkit-text-stroke:0.25px #333;">Hillcrest Friday Feast</span></div><div class="a" style="left:660px;top:133.00px;width:120.75px;height:33px;overflow:hidden"><span class="t" style="left:5.30px;top:11.03px;font-size:13.2px;line-height:13.2px;color:#333;transform:scaleX(1.0760);transform-origin:left;-webkit-text-stroke:0.25px #333;">4,710.00</span></div><div class="a" style="left:781.75px;top:133.00px;width:120.75px;height:33px;overflow:hidden"><span class="t" style="left:5.30px;top:11.03px;font-size:13.2px;line-height:13.2px;color:#333;transform:scaleX(1.0760);transform-origin:left;-webkit-text-stroke:0.25px #333;">2,355.00</span></div><div class="a" style="left:903.5px;top:133.00px;width:120.75px;height:33px;overflow:hidden"><span class="t" style="left:5.30px;top:11.03px;font-size:13.2px;line-height:13.2px;color:#333;transform:scaleX(1.0760);transform-origin:left;-webkit-text-stroke:0.25px #333;">4,710.00</span></div><div class="a" style="left:1025.25px;top:133.00px;width:120.75px;height:33px;overflow:hidden"><span class="t" style="left:5.30px;top:11.03px;font-size:13.2px;line-height:13.2px;color:#333;transform:scaleX(1.0766);transform-origin:left;-webkit-text-stroke:0.25px #333;">0.00</span></div><div class="a" style="left:1147px;top:133.00px;width:120.75px;height:33px;overflow:hidden"><span class="t" style="left:5.30px;top:11.03px;font-size:13.2px;line-height:13.2px;color:#333;transform:scaleX(1.0766);transform-origin:left;-webkit-text-stroke:0.25px #333;">0.00</span></div><svg style="left:1301px;top:142.00px" width="4" height="14"><circle cx="2" cy="2" r="1.3" fill="#3a3a3a"/><circle cx="2" cy="7" r="1.3" fill="#3a3a3a"/><circle cx="2" cy="12" r="1.3" fill="#3a3a3a"/></svg><div class="a" style="left:0;top:199px;width:1333px;height:1px;background:#dcdcdc"></div><div class="a" style="left:0px;top:166.25px;width:50.60000000000002px;height:33px;overflow:hidden"><span class="t" style="left:5.30px;top:11.03px;font-size:13.2px;line-height:13.2px;color:#333;transform:scaleX(1.0773);transform-origin:left;-webkit-text-stroke:0.25px #333;">4868</span></div><div class="a" style="left:51.60000000000002px;top:166.25px;width:120.39999999999998px;height:33px;overflow:hidden"><span class="t" style="left:5.30px;top:11.03px;font-size:13.2px;line-height:13.2px;color:#333;transform:scaleX(1.0659);transform-origin:left;-webkit-text-stroke:0.25px #333;">25 Oct 2023</span></div><div class="a" style="left:173px;top:166.25px;width:120.75px;height:33px;overflow:hidden"><span class="t" style="left:5.30px;top:11.03px;font-size:13.2px;line-height:13.2px;color:#333;transform:scaleX(1.0974);transform-origin:left;-webkit-text-stroke:0.25px #333;">Hillcrest Test</span></div><div class="a" style="left:660px;top:166.25px;width:120.75px;height:33px;overflow:hidden"><span class="t" style="left:5.30px;top:11.03px;font-size:13.2px;line-height:13.2px;color:#333;transform:scaleX(1.0760);transform-origin:left;-webkit-text-stroke:0.25px #333;">2,120.00</span></div><div class="a" style="left:781.75px;top:166.25px;width:120.75px;height:33px;overflow:hidden"><span class="t" style="left:5.30px;top:11.03px;font-size:13.2px;line-height:13.2px;color:#333;transform:scaleX(1.0760);transform-origin:left;-webkit-text-stroke:0.25px #333;">1,060.00</span></div><div class="a" style="left:903.5px;top:166.25px;width:120.75px;height:33px;overflow:hidden"><span class="t" style="left:5.30px;top:11.03px;font-size:13.2px;line-height:13.2px;color:#333;transform:scaleX(1.0760);transform-origin:left;-webkit-text-stroke:0.25px #333;">2,120.00</span></div><div class="a" style="left:1025.25px;top:166.25px;width:120.75px;height:33px;overflow:hidden"><span class="t" style="left:5.30px;top:11.03px;font-size:13.2px;line-height:13.2px;color:#333;transform:scaleX(1.0766);transform-origin:left;-webkit-text-stroke:0.25px #333;">0.00</span></div><div class="a" style="left:1147px;top:166.25px;width:120.75px;height:33px;overflow:hidden"><span class="t" style="left:5.30px;top:11.03px;font-size:13.2px;line-height:13.2px;color:#333;transform:scaleX(1.0766);transform-origin:left;-webkit-text-stroke:0.25px #333;">0.00</span></div><svg style="left:1301px;top:175.25px" width="4" height="14"><circle cx="2" cy="2" r="1.3" fill="#3a3a3a"/><circle cx="2" cy="7" r="1.3" fill="#3a3a3a"/><circle cx="2" cy="12" r="1.3" fill="#3a3a3a"/></svg><div class="a" style="left:0;top:232px;width:1333px;height:1px;background:#dcdcdc"></div><div class="a" style="left:0px;top:199.50px;width:50.60000000000002px;height:33px;overflow:hidden"><span class="t" style="left:5.30px;top:11.03px;font-size:13.2px;line-height:13.2px;color:#333;transform:scaleX(1.0773);transform-origin:left;-webkit-text-stroke:0.25px #333;">4832</span></div><div class="a" style="left:51.60000000000002px;top:199.50px;width:120.39999999999998px;height:33px;overflow:hidden"><span class="t" style="left:5.30px;top:11.03px;font-size:13.2px;line-height:13.2px;color:#333;transform:scaleX(1.0505);transform-origin:left;-webkit-text-stroke:0.25px #333;">11 Sep 2023</span></div><div class="a" style="left:173px;top:199.50px;width:120.75px;height:33px;overflow:hidden"><span class="t" style="left:5.30px;top:11.03px;font-size:13.2px;line-height:13.2px;color:#333;transform:scaleX(1.1455);transform-origin:left;-webkit-text-stroke:0.25px #333;">9/11 Test</span></div><div class="a" style="left:660px;top:199.50px;width:120.75px;height:33px;overflow:hidden"><span class="t" style="left:5.30px;top:11.03px;font-size:13.2px;line-height:13.2px;color:#333;transform:scaleX(1.0760);transform-origin:left;-webkit-text-stroke:0.25px #333;">4,240.00</span></div><div class="a" style="left:781.75px;top:199.50px;width:120.75px;height:33px;overflow:hidden"><span class="t" style="left:5.30px;top:11.03px;font-size:13.2px;line-height:13.2px;color:#333;transform:scaleX(1.0760);transform-origin:left;-webkit-text-stroke:0.25px #333;">2,120.00</span></div><div class="a" style="left:903.5px;top:199.50px;width:120.75px;height:33px;overflow:hidden"><span class="t" style="left:5.30px;top:11.03px;font-size:13.2px;line-height:13.2px;color:#333;transform:scaleX(1.0760);transform-origin:left;-webkit-text-stroke:0.25px #333;">4,240.00</span></div><div class="a" style="left:1025.25px;top:199.50px;width:120.75px;height:33px;overflow:hidden"><span class="t" style="left:5.30px;top:11.03px;font-size:13.2px;line-height:13.2px;color:#333;transform:scaleX(1.0766);transform-origin:left;-webkit-text-stroke:0.25px #333;">0.00</span></div><div class="a" style="left:1147px;top:199.50px;width:120.75px;height:33px;overflow:hidden"><span class="t" style="left:5.30px;top:11.03px;font-size:13.2px;line-height:13.2px;color:#333;transform:scaleX(1.0766);transform-origin:left;-webkit-text-stroke:0.25px #333;">0.00</span></div><svg style="left:1301px;top:208.50px" width="4" height="14"><circle cx="2" cy="2" r="1.3" fill="#3a3a3a"/><circle cx="2" cy="7" r="1.3" fill="#3a3a3a"/><circle cx="2" cy="12" r="1.3" fill="#3a3a3a"/></svg><div class="a" style="left:0;top:265px;width:1333px;height:1px;background:#dcdcdc"></div><div class="a" style="left:0px;top:232.75px;width:50.60000000000002px;height:33px;overflow:hidden"><span class="t" style="left:5.30px;top:11.03px;font-size:13.2px;line-height:13.2px;color:#333;transform:scaleX(1.0773);transform-origin:left;-webkit-text-stroke:0.25px #333;">4773</span></div><div class="a" style="left:51.60000000000002px;top:232.75px;width:120.39999999999998px;height:33px;overflow:hidden"><span class="t" style="left:5.30px;top:11.03px;font-size:13.2px;line-height:13.2px;color:#333;transform:scaleX(1.0665);transform-origin:left;-webkit-text-stroke:0.25px #333;">18 Aug 2023</span></div><div class="a" style="left:173px;top:232.75px;width:120.75px;height:33px;overflow:hidden"><span class="t" style="left:5.30px;top:11.03px;font-size:13.2px;line-height:13.2px;color:#333;transform:scaleX(1.0638);transform-origin:left;-webkit-text-stroke:0.25px #333;">The Chapman Wedding</span></div><div class="a" style="left:294.75px;top:232.75px;width:120.75px;height:33px;overflow:hidden"><span class="t" style="left:5.30px;top:11.03px;font-size:13.2px;line-height:13.2px;color:#333;transform:scaleX(1.0447);transform-origin:left;-webkit-text-stroke:0.25px #333;">Bryce&nbsp; Chapman</span></div><div class="a" style="left:416.5px;top:232.75px;width:120.75px;height:33px;overflow:hidden"><span class="t" style="left:5.30px;top:11.03px;font-size:13.2px;line-height:13.2px;color:#333;transform:scaleX(1.0857);transform-origin:left;-webkit-text-stroke:0.25px #333;">nicole@clubcaddie.com</span></div><div class="a" style="left:538.25px;top:232.75px;width:120.75px;height:33px;overflow:hidden"><span class="t" style="left:5.30px;top:11.03px;font-size:13.2px;line-height:13.2px;color:#333;transform:scaleX(1.0773);transform-origin:left;-webkit-text-stroke:0.25px #333;">8888888888</span></div><div class="a" style="left:660px;top:232.75px;width:120.75px;height:33px;overflow:hidden"><span class="t" style="left:5.30px;top:11.03px;font-size:13.2px;line-height:13.2px;color:#333;transform:scaleX(1.0760);transform-origin:left;-webkit-text-stroke:0.25px #333;">7,950.00</span></div><div class="a" style="left:781.75px;top:232.75px;width:120.75px;height:33px;overflow:hidden"><span class="t" style="left:5.30px;top:11.03px;font-size:13.2px;line-height:13.2px;color:#333;transform:scaleX(1.0760);transform-origin:left;-webkit-text-stroke:0.25px #333;">9,002.78</span></div><div class="a" style="left:903.5px;top:232.75px;width:120.75px;height:33px;overflow:hidden"><span class="t" style="left:5.30px;top:11.03px;font-size:13.2px;line-height:13.2px;color:#333;transform:scaleX(1.0768);transform-origin:left;-webkit-text-stroke:0.25px #333;">200.00</span></div><div class="a" style="left:1025.25px;top:232.75px;width:120.75px;height:33px;overflow:hidden"><span class="t" style="left:5.30px;top:11.03px;font-size:13.2px;line-height:13.2px;color:#333;transform:scaleX(1.0760);transform-origin:left;-webkit-text-stroke:0.25px #333;">8,802.78</span></div><div class="a" style="left:1147px;top:232.75px;width:120.75px;height:33px;overflow:hidden"><span class="t" style="left:5.30px;top:11.03px;font-size:13.2px;line-height:13.2px;color:#333;transform:scaleX(1.0767);transform-origin:left;-webkit-text-stroke:0.25px #333;">-1,052.78</span></div><svg style="left:1301px;top:241.75px" width="4" height="14"><circle cx="2" cy="2" r="1.3" fill="#3a3a3a"/><circle cx="2" cy="7" r="1.3" fill="#3a3a3a"/><circle cx="2" cy="12" r="1.3" fill="#3a3a3a"/></svg><div class="a" style="left:0;top:298px;width:1333px;height:1px;background:#dcdcdc"></div><div class="a" style="left:0px;top:266.00px;width:50.60000000000002px;height:33px;overflow:hidden"><span class="t" style="left:5.30px;top:11.03px;font-size:13.2px;line-height:13.2px;color:#333;transform:scaleX(1.0773);transform-origin:left;-webkit-text-stroke:0.25px #333;">4788</span></div><div class="a" style="left:51.60000000000002px;top:266.00px;width:120.39999999999998px;height:33px;overflow:hidden"><span class="t" style="left:5.30px;top:11.03px;font-size:13.2px;line-height:13.2px;color:#333;transform:scaleX(1.0665);transform-origin:left;-webkit-text-stroke:0.25px #333;">15 Aug 2023</span></div><div class="a" style="left:173px;top:266.00px;width:120.75px;height:33px;overflow:hidden"><span class="t" style="left:5.30px;top:11.03px;font-size:13.2px;line-height:13.2px;color:#333;transform:scaleX(1.0658);transform-origin:left;-webkit-text-stroke:0.25px #333;">August Luncheon</span></div><div class="a" style="left:660px;top:266.00px;width:120.75px;height:33px;overflow:hidden"><span class="t" style="left:5.30px;top:11.03px;font-size:13.2px;line-height:13.2px;color:#333;transform:scaleX(1.0760);transform-origin:left;-webkit-text-stroke:0.25px #333;">2,131.05</span></div><div class="a" style="left:781.75px;top:266.00px;width:120.75px;height:33px;overflow:hidden"><span class="t" style="left:5.30px;top:11.03px;font-size:13.2px;line-height:13.2px;color:#333;transform:scaleX(1.0760);transform-origin:left;-webkit-text-stroke:0.25px #333;">2,236.05</span></div><div class="a" style="left:903.5px;top:266.00px;width:120.75px;height:33px;overflow:hidden"><span class="t" style="left:5.30px;top:11.03px;font-size:13.2px;line-height:13.2px;color:#333;transform:scaleX(1.0766);transform-origin:left;-webkit-text-stroke:0.25px #333;">0.00</span></div><div class="a" style="left:1025.25px;top:266.00px;width:120.75px;height:33px;overflow:hidden"><span class="t" style="left:5.30px;top:11.03px;font-size:13.2px;line-height:13.2px;color:#333;transform:scaleX(1.0760);transform-origin:left;-webkit-text-stroke:0.25px #333;">2,236.05</span></div><div class="a" style="left:1147px;top:266.00px;width:120.75px;height:33px;overflow:hidden"><span class="t" style="left:5.30px;top:11.03px;font-size:13.2px;line-height:13.2px;color:#333;transform:scaleX(1.0777);transform-origin:left;-webkit-text-stroke:0.25px #333;">-105.00</span></div><svg style="left:1301px;top:275.00px" width="4" height="14"><circle cx="2" cy="2" r="1.3" fill="#3a3a3a"/><circle cx="2" cy="7" r="1.3" fill="#3a3a3a"/><circle cx="2" cy="12" r="1.3" fill="#3a3a3a"/></svg><div class="a" style="left:0;top:332px;width:1333px;height:1px;background:#dcdcdc"></div><div class="a" style="left:0px;top:299.25px;width:50.60000000000002px;height:33px;overflow:hidden"><span class="t" style="left:5.30px;top:11.03px;font-size:13.2px;line-height:13.2px;color:#333;transform:scaleX(1.0773);transform-origin:left;-webkit-text-stroke:0.25px #333;">4768</span></div><div class="a" style="left:51.60000000000002px;top:299.25px;width:120.39999999999998px;height:33px;overflow:hidden"><span class="t" style="left:5.30px;top:11.03px;font-size:13.2px;line-height:13.2px;color:#333;transform:scaleX(1.0440);transform-origin:left;-webkit-text-stroke:0.25px #333;">27 Jul 2023</span></div><div class="a" style="left:173px;top:299.25px;width:120.75px;height:33px;overflow:hidden"><span class="t" style="left:5.30px;top:11.03px;font-size:13.2px;line-height:13.2px;color:#333;transform:scaleX(1.0637);transform-origin:left;-webkit-text-stroke:0.25px #333;">Test - Sierra Golf</span></div><div class="a" style="left:660px;top:299.25px;width:120.75px;height:33px;overflow:hidden"><span class="t" style="left:5.30px;top:11.03px;font-size:13.2px;line-height:13.2px;color:#333;transform:scaleX(1.0760);transform-origin:left;-webkit-text-stroke:0.25px #333;">1,797.00</span></div><div class="a" style="left:781.75px;top:299.25px;width:120.75px;height:33px;overflow:hidden"><span class="t" style="left:5.30px;top:11.03px;font-size:13.2px;line-height:13.2px;color:#333;transform:scaleX(1.0760);transform-origin:left;-webkit-text-stroke:0.25px #333;">1,797.00</span></div><div class="a" style="left:903.5px;top:299.25px;width:120.75px;height:33px;overflow:hidden"><span class="t" style="left:5.30px;top:11.03px;font-size:13.2px;line-height:13.2px;color:#333;transform:scaleX(1.0760);transform-origin:left;-webkit-text-stroke:0.25px #333;">1,797.00</span></div><div class="a" style="left:1025.25px;top:299.25px;width:120.75px;height:33px;overflow:hidden"><span class="t" style="left:5.30px;top:11.03px;font-size:13.2px;line-height:13.2px;color:#333;transform:scaleX(1.0766);transform-origin:left;-webkit-text-stroke:0.25px #333;">0.00</span></div><div class="a" style="left:1147px;top:299.25px;width:120.75px;height:33px;overflow:hidden"><span class="t" style="left:5.30px;top:11.03px;font-size:13.2px;line-height:13.2px;color:#333;transform:scaleX(1.0766);transform-origin:left;-webkit-text-stroke:0.25px #333;">0.00</span></div><svg style="left:1301px;top:308.25px" width="4" height="14"><circle cx="2" cy="2" r="1.3" fill="#3a3a3a"/><circle cx="2" cy="7" r="1.3" fill="#3a3a3a"/><circle cx="2" cy="12" r="1.3" fill="#3a3a3a"/></svg><div class="a" style="left:0;top:365px;width:1333px;height:1px;background:#dcdcdc"></div><div class="a" style="left:0px;top:332.50px;width:50.60000000000002px;height:33px;overflow:hidden"><span class="t" style="left:5.30px;top:11.03px;font-size:13.2px;line-height:13.2px;color:#333;transform:scaleX(1.0773);transform-origin:left;-webkit-text-stroke:0.25px #333;">4753</span></div><div class="a" style="left:51.60000000000002px;top:332.50px;width:120.39999999999998px;height:33px;overflow:hidden"><span class="t" style="left:5.30px;top:11.03px;font-size:13.2px;line-height:13.2px;color:#333;transform:scaleX(1.0440);transform-origin:left;-webkit-text-stroke:0.25px #333;">18 Jul 2023</span></div><div class="a" style="left:173px;top:332.50px;width:120.75px;height:33px;overflow:hidden"><span class="t" style="left:5.30px;top:11.03px;font-size:13.2px;line-height:13.2px;color:#333;transform:scaleX(1.0974);transform-origin:left;-webkit-text-stroke:0.25px #333;">Move Test (2)</span></div><div class="a" style="left:660px;top:332.50px;width:120.75px;height:33px;overflow:hidden"><span class="t" style="left:5.30px;top:11.03px;font-size:13.2px;line-height:13.2px;color:#333;transform:scaleX(1.0766);transform-origin:left;-webkit-text-stroke:0.25px #333;">0.00</span></div><div class="a" style="left:781.75px;top:332.50px;width:120.75px;height:33px;overflow:hidden"><span class="t" style="left:5.30px;top:11.03px;font-size:13.2px;line-height:13.2px;color:#333;transform:scaleX(1.0766);transform-origin:left;-webkit-text-stroke:0.25px #333;">0.00</span></div><div class="a" style="left:903.5px;top:332.50px;width:120.75px;height:33px;overflow:hidden"><span class="t" style="left:5.30px;top:11.03px;font-size:13.2px;line-height:13.2px;color:#333;transform:scaleX(1.0766);transform-origin:left;-webkit-text-stroke:0.25px #333;">0.00</span></div><div class="a" style="left:1025.25px;top:332.50px;width:120.75px;height:33px;overflow:hidden"><span class="t" style="left:5.30px;top:11.03px;font-size:13.2px;line-height:13.2px;color:#333;transform:scaleX(1.0766);transform-origin:left;-webkit-text-stroke:0.25px #333;">0.00</span></div><div class="a" style="left:1147px;top:332.50px;width:120.75px;height:33px;overflow:hidden"><span class="t" style="left:5.30px;top:11.03px;font-size:13.2px;line-height:13.2px;color:#333;transform:scaleX(1.0766);transform-origin:left;-webkit-text-stroke:0.25px #333;">0.00</span></div><svg style="left:1301px;top:341.50px" width="4" height="14"><circle cx="2" cy="2" r="1.3" fill="#3a3a3a"/><circle cx="2" cy="7" r="1.3" fill="#3a3a3a"/><circle cx="2" cy="12" r="1.3" fill="#3a3a3a"/></svg><div class="a" style="left:0;top:398px;width:1333px;height:1px;background:#dcdcdc"></div><div class="a" style="left:0px;top:365.75px;width:50.60000000000002px;height:33px;overflow:hidden"><span class="t" style="left:5.30px;top:11.03px;font-size:13.2px;line-height:13.2px;color:#333;transform:scaleX(1.0773);transform-origin:left;-webkit-text-stroke:0.25px #333;">4741</span></div><div class="a" style="left:51.60000000000002px;top:365.75px;width:120.39999999999998px;height:33px;overflow:hidden"><span class="t" style="left:5.30px;top:11.03px;font-size:13.2px;line-height:13.2px;color:#333;transform:scaleX(1.0440);transform-origin:left;-webkit-text-stroke:0.25px #333;">17 Jul 2023</span></div><div class="a" style="left:173px;top:365.75px;width:120.75px;height:33px;overflow:hidden"><span class="t" style="left:5.30px;top:11.03px;font-size:13.2px;line-height:13.2px;color:#333;transform:scaleX(1.0892);transform-origin:left;-webkit-text-stroke:0.25px #333;">Ryan/Justin/Adam</span></div><div class="a" style="left:660px;top:365.75px;width:120.75px;height:33px;overflow:hidden"><span class="t" style="left:5.30px;top:11.03px;font-size:13.2px;line-height:13.2px;color:#333;transform:scaleX(1.0760);transform-origin:left;-webkit-text-stroke:0.25px #333;">1,338.58</span></div><div class="a" style="left:781.75px;top:365.75px;width:120.75px;height:33px;overflow:hidden"><span class="t" style="left:5.30px;top:11.03px;font-size:13.2px;line-height:13.2px;color:#333;transform:scaleX(1.0760);transform-origin:left;-webkit-text-stroke:0.25px #333;">1,338.58</span></div><div class="a" style="left:903.5px;top:365.75px;width:120.75px;height:33px;overflow:hidden"><span class="t" style="left:5.30px;top:11.03px;font-size:13.2px;line-height:13.2px;color:#333;transform:scaleX(1.0760);transform-origin:left;-webkit-text-stroke:0.25px #333;">1,338.58</span></div><div class="a" style="left:1025.25px;top:365.75px;width:120.75px;height:33px;overflow:hidden"><span class="t" style="left:5.30px;top:11.03px;font-size:13.2px;line-height:13.2px;color:#333;transform:scaleX(1.0766);transform-origin:left;-webkit-text-stroke:0.25px #333;">0.00</span></div><div class="a" style="left:1147px;top:365.75px;width:120.75px;height:33px;overflow:hidden"><span class="t" style="left:5.30px;top:11.03px;font-size:13.2px;line-height:13.2px;color:#333;transform:scaleX(1.0766);transform-origin:left;-webkit-text-stroke:0.25px #333;">0.00</span></div><svg style="left:1301px;top:374.75px" width="4" height="14"><circle cx="2" cy="2" r="1.3" fill="#3a3a3a"/><circle cx="2" cy="7" r="1.3" fill="#3a3a3a"/><circle cx="2" cy="12" r="1.3" fill="#3a3a3a"/></svg><div class="a" style="left:0;top:431px;width:1333px;height:1px;background:#dcdcdc"></div><div class="a" style="left:0px;top:399.00px;width:50.60000000000002px;height:33px;overflow:hidden"><span class="t" style="left:5.30px;top:11.03px;font-size:13.2px;line-height:13.2px;color:#333;transform:scaleX(1.0773);transform-origin:left;-webkit-text-stroke:0.25px #333;">4709</span></div><div class="a" style="left:51.60000000000002px;top:399.00px;width:120.39999999999998px;height:33px;overflow:hidden"><span class="t" style="left:5.30px;top:11.03px;font-size:13.2px;line-height:13.2px;color:#333;transform:scaleX(1.0440);transform-origin:left;-webkit-text-stroke:0.25px #333;">03 Jun 2023</span></div><div class="a" style="left:173px;top:399.00px;width:120.75px;height:33px;overflow:hidden"><span class="t" style="left:5.30px;top:11.03px;font-size:13.2px;line-height:13.2px;color:#333;transform:scaleX(1.0527);transform-origin:left;-webkit-text-stroke:0.25px #333;">Club CAddie Test</span></div><div class="a" style="left:294.75px;top:399.00px;width:120.75px;height:33px;overflow:hidden"><span class="t" style="left:5.30px;top:11.03px;font-size:13.2px;line-height:13.2px;color:#333;transform:scaleX(1.0663);transform-origin:left;-webkit-text-stroke:0.25px #333;">Drew Cannon</span></div><div class="a" style="left:416.5px;top:399.00px;width:120.75px;height:33px;overflow:hidden"><span class="t" style="left:5.30px;top:11.03px;font-size:13.2px;line-height:13.2px;color:#333;transform:scaleX(1.1000);transform-origin:left;-webkit-text-stroke:0.25px #333;">drewraider1997@gmail.com</span></div><div class="a" style="left:538.25px;top:399.00px;width:120.75px;height:33px;overflow:hidden"><span class="t" style="left:5.30px;top:11.03px;font-size:13.2px;line-height:13.2px;color:#333;transform:scaleX(1.0773);transform-origin:left;-webkit-text-stroke:0.25px #333;">8107304617</span></div><div class="a" style="left:660px;top:399.00px;width:120.75px;height:33px;overflow:hidden"><span class="t" style="left:5.30px;top:11.03px;font-size:13.2px;line-height:13.2px;color:#333;transform:scaleX(1.0760);transform-origin:left;-webkit-text-stroke:0.25px #333;">6,510.00</span></div><div class="a" style="left:781.75px;top:399.00px;width:120.75px;height:33px;overflow:hidden"><span class="t" style="left:5.30px;top:11.03px;font-size:13.2px;line-height:13.2px;color:#333;transform:scaleX(1.0760);transform-origin:left;-webkit-text-stroke:0.25px #333;">6,510.00</span></div><div class="a" style="left:903.5px;top:399.00px;width:120.75px;height:33px;overflow:hidden"><span class="t" style="left:5.30px;top:11.03px;font-size:13.2px;line-height:13.2px;color:#333;transform:scaleX(1.0760);transform-origin:left;-webkit-text-stroke:0.25px #333;">6,510.00</span></div><div class="a" style="left:1025.25px;top:399.00px;width:120.75px;height:33px;overflow:hidden"><span class="t" style="left:5.30px;top:11.03px;font-size:13.2px;line-height:13.2px;color:#333;transform:scaleX(1.0766);transform-origin:left;-webkit-text-stroke:0.25px #333;">0.00</span></div><div class="a" style="left:1147px;top:399.00px;width:120.75px;height:33px;overflow:hidden"><span class="t" style="left:5.30px;top:11.03px;font-size:13.2px;line-height:13.2px;color:#333;transform:scaleX(1.0766);transform-origin:left;-webkit-text-stroke:0.25px #333;">0.00</span></div><svg style="left:1301px;top:408.00px" width="4" height="14"><circle cx="2" cy="2" r="1.3" fill="#3a3a3a"/><circle cx="2" cy="7" r="1.3" fill="#3a3a3a"/><circle cx="2" cy="12" r="1.3" fill="#3a3a3a"/></svg><div class="a" style="left:0;top:465px;width:1333px;height:1px;background:#dcdcdc"></div><div class="a" style="left:0px;top:432.25px;width:50.60000000000002px;height:33px;overflow:hidden"><span class="t" style="left:5.30px;top:11.03px;font-size:13.2px;line-height:13.2px;color:#333;transform:scaleX(1.0773);transform-origin:left;-webkit-text-stroke:0.25px #333;">4706</span></div><div class="a" style="left:51.60000000000002px;top:432.25px;width:120.39999999999998px;height:33px;overflow:hidden"><span class="t" style="left:5.30px;top:11.03px;font-size:13.2px;line-height:13.2px;color:#333;transform:scaleX(1.0794);transform-origin:left;-webkit-text-stroke:0.25px #333;">26 May 2023</span></div><div class="a" style="left:173px;top:432.25px;width:120.75px;height:33px;overflow:hidden"><span class="t" style="left:5.30px;top:11.03px;font-size:13.2px;line-height:13.2px;color:#333;transform:scaleX(1.0607);transform-origin:left;-webkit-text-stroke:0.25px #333;">River Glen Test</span></div><div class="a" style="left:660px;top:432.25px;width:120.75px;height:33px;overflow:hidden"><span class="t" style="left:5.30px;top:11.03px;font-size:13.2px;line-height:13.2px;color:#333;transform:scaleX(1.0768);transform-origin:left;-webkit-text-stroke:0.25px #333;">162.50</span></div><div class="a" style="left:781.75px;top:432.25px;width:120.75px;height:33px;overflow:hidden"><span class="t" style="left:5.30px;top:11.03px;font-size:13.2px;line-height:13.2px;color:#333;transform:scaleX(1.0768);transform-origin:left;-webkit-text-stroke:0.25px #333;">162.50</span></div><div class="a" style="left:903.5px;top:432.25px;width:120.75px;height:33px;overflow:hidden"><span class="t" style="left:5.30px;top:11.03px;font-size:13.2px;line-height:13.2px;color:#333;transform:scaleX(1.0766);transform-origin:left;-webkit-text-stroke:0.25px #333;">0.00</span></div><div class="a" style="left:1025.25px;top:432.25px;width:120.75px;height:33px;overflow:hidden"><span class="t" style="left:5.30px;top:11.03px;font-size:13.2px;line-height:13.2px;color:#333;transform:scaleX(1.0768);transform-origin:left;-webkit-text-stroke:0.25px #333;">162.50</span></div><div class="a" style="left:1147px;top:432.25px;width:120.75px;height:33px;overflow:hidden"><span class="t" style="left:5.30px;top:11.03px;font-size:13.2px;line-height:13.2px;color:#333;transform:scaleX(1.0766);transform-origin:left;-webkit-text-stroke:0.25px #333;">1.00</span></div><svg style="left:1301px;top:441.25px" width="4" height="14"><circle cx="2" cy="2" r="1.3" fill="#3a3a3a"/><circle cx="2" cy="7" r="1.3" fill="#3a3a3a"/><circle cx="2" cy="12" r="1.3" fill="#3a3a3a"/></svg><div class="a" style="left:51px;top:0;width:1px;height:450px;background:#dcdcdc"></div><div class="a" style="left:172px;top:0;width:1px;height:450px;background:#dcdcdc"></div><div class="a" style="left:294px;top:0;width:1px;height:450px;background:#dcdcdc"></div><div class="a" style="left:416px;top:0;width:1px;height:450px;background:#dcdcdc"></div><div class="a" style="left:538px;top:0;width:1px;height:450px;background:#dcdcdc"></div><div class="a" style="left:660px;top:0;width:1px;height:450px;background:#dcdcdc"></div><div class="a" style="left:781px;top:0;width:1px;height:450px;background:#dcdcdc"></div><div class="a" style="left:903px;top:0;width:1px;height:450px;background:#dcdcdc"></div><div class="a" style="left:1025px;top:0;width:1px;height:450px;background:#dcdcdc"></div><div class="a" style="left:1146px;top:0;width:1px;height:450px;background:#dcdcdc"></div><div class="a" style="left:1268px;top:0;width:1px;height:450px;background:#dcdcdc"></div><div class="a" style="left:1333px;top:0;width:1px;height:450px;background:#dcdcdc"></div></div><div class="a" style="left:236px;top:219px;width:2px;height:482px;background:#78a5d8"></div><div class="a" style="left:236px;top:700px;width:1341px;height:1.5px;background:#cfcfcf"></div><div class="a" style="left:1572px;top:252px;width:5px;height:98px;background:#a8a8a8;border-radius:2.5px"></div><svg style="left:247px;top:716.5px" width="20" height="11"><path d="M0.5 10.2 L9.5 0.8 L18.5 10.2 Z" fill="#111"/></svg><span class="t" style="left:278.00px;top:716.46px;font-size:12.1px;line-height:12.1px;font-weight:bold;color:#222;transform:scaleX(0.9916);transform-origin:left;">Total Pages : 6 | Page : 1</span><svg style="left:429px;top:716.5px" width="20" height="11"><path d="M0.5 0.8 L19 0.8 L9.75 10.2 Z" fill="#111"/></svg><svg style="left:1546px;top:709px" width="28" height="22" viewBox="0 0 28 22">
<path d="M15 4.8 H25 V22 H15 Z" fill="#2d8a57"/>
<path d="M16 6 H19.5 V10 H16 Z M20.5 6 H24 V10 H20.5 Z M16 11 H19.5 V15 H16 Z M20.5 11 H24 V15 H20.5 Z M16 16 H19.5 V20 H16 Z M20.5 16 H24 V20 H20.5 Z" fill="#a6d0b8"/>
<path d="M3 5 L15 2.7 V22 H3 Z" fill="#0f7038"/>
<path d="M6.3 8 L8.3 8 L9.2 10.8 L10.2 8 L12.1 8 L10.3 12.6 L12.3 17.5 L10.2 17.5 L9.2 14.5 L8.2 17.5 L6.2 17.5 L8.1 12.6 Z" fill="#d8eee0"/>
</svg><div class="a" style="left:1417px;top:344.6px;width:131px;height:97.5px;border:1px solid #444;background:#fff"></div><div class="a" style="left:1418px;top:346px;width:129px;height:33px;background:#d9d9d9"></div><span class="t" style="left:1449.00px;top:355.26px;font-size:13.4px;line-height:13.4px;color:#333;transform:scaleX(1.0387);transform-origin:left;-webkit-text-stroke:0.2px #333;">View / Edit</span><span class="t" style="left:1449.00px;top:387.96px;font-size:13.4px;line-height:13.4px;color:#333;transform:scaleX(1.0122);transform-origin:left;-webkit-text-stroke:0.2px #333;">Archive</span><span class="t" style="left:1449.00px;top:418.96px;font-size:13.4px;line-height:13.4px;color:#333;transform:scaleX(0.9777);transform-origin:left;-webkit-text-stroke:0.2px #333;">Clone</span><svg style="left:1420px;top:352px" width="22" height="18" viewBox="0 0 22 18">
<path d="M6.5 4 V2.3 H13.5 L18 6.5 V15.8 H6.5 V12" fill="none" stroke="#222" stroke-width="1.6"/>
<path d="M13.5 2.3 V6.5 H18" fill="none" stroke="#222" stroke-width="1.4"/>
<path d="M2.3 4.2 L10.5 11.5 L9 13 L7.8 13.2 L8 12 L0.8 5.7 Z" fill="#222"/>
</svg><svg style="left:1422px;top:383px" width="18" height="18" viewBox="0 0 18 18">
<rect x="2.3" y="3" width="12.6" height="2.3" rx="0.5" fill="#2a2a2a"/><rect x="6" y="1.2" width="5.2" height="2.2" rx="0.6" fill="#2a2a2a"/>
<path d="M3.3 5.8 H13.9 L13.2 16.8 H4 Z" fill="#2a2a2a"/>
<rect x="5.6" y="7" width="1.1" height="8.6" fill="#9a9a9a"/><rect x="8.05" y="7" width="1.1" height="8.6" fill="#9a9a9a"/><rect x="10.5" y="7" width="1.1" height="8.6" fill="#9a9a9a"/>
</svg><svg style="left:1421px;top:415px" width="20" height="20" viewBox="0 0 20 20">
<path d="M5.5 7 H3.5 Q2.5 7 2.5 8 V16.5 Q2.5 17.5 3.5 17.5 H12 Q13 17.5 13 16.5 V14.5" fill="none" stroke="#222" stroke-width="1.8"/>
<rect x="6.4" y="2.8" width="10.8" height="10.8" rx="1.5" fill="none" stroke="#222" stroke-width="1.8"/>
<path d="M11.8 5.3 V11.1 M8.9 8.2 H14.7" stroke="#222" stroke-width="1.6"/>
</svg><div class="a" style="left:1px;top:257px;width:219.5px;height:58px;border:4.2px solid #ec1c24"></div><div class="a" style="left:1500.7px;top:219px;width:74px;height:33.5px;border:4.2px solid #ec1c24"></div><div class="a" style="left:1503.7px;top:317.3px;width:65.6px;height:29px;border:3.6px solid #ec1c24"></div><div class="a" style="left:1417px;top:345px;width:131px;height:34.7px;border:3.6px solid #ec1c24"></div><svg style="left:0;top:0" width="1577" height="729">
<path d="M233.4 284.6 L276.2 270.8 L276.2 277.7 L318 277.7 L318 291.6 L276.2 291.6 L276.2 298.4 Z" fill="none" stroke="#ec1c24" stroke-width="4.2" stroke-linejoin="round"/>
<path d="M1478.4 239.5 L1445.6 227.2 L1445.6 233.2 L1412.1 233.2 L1412.1 245.3 L1445.6 245.3 L1445.6 251.6 Z" fill="none" stroke="#ec1c24" stroke-width="4.2" stroke-linejoin="round"/>
</svg></body></html>
